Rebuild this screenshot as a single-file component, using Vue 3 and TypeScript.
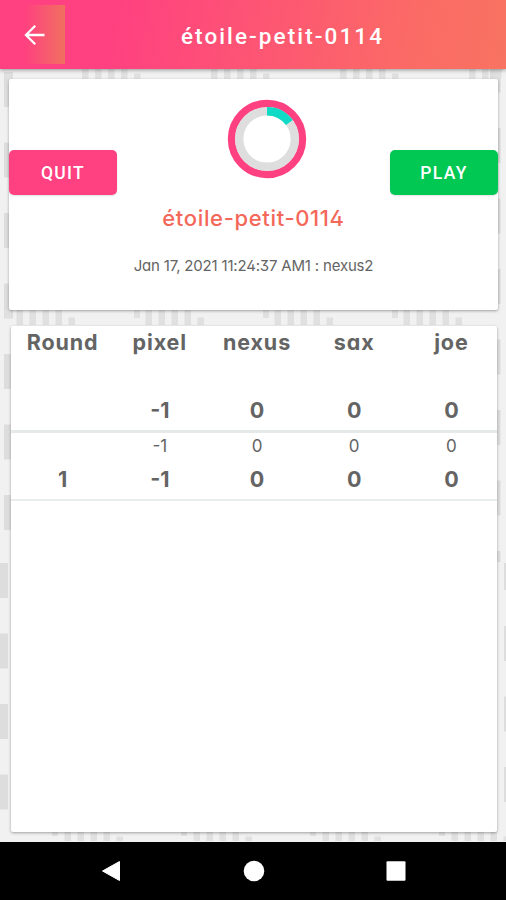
<script setup lang="ts">
interface RoundRow {
  label: string
  points: number[]
  totals: number[]
}

const gameName = 'étoile-petit-0114'
const created = 'Jan 17, 2021 11:24:37 AM1 : nexus2'
const players: string[] = ['pixel', 'nexus', 'sax', 'joe']
const totals: number[] = [-1, 0, 0, 0]
const rounds: RoundRow[] = [{ label: '1', points: [-1, 0, 0, 0], totals: [-1, 0, 0, 0] }]

// Wallpaper dashes: each entry is x, y, width, height.
type Box = [number, number, number, number]
const period = 70.5
const dashes: Box[] = [
  ...Array.from({ length: 7 }, (_, i): Box => [4, 72 + i * period, 9, 35]),
  ...Array.from({ length: 4 }, (_, i): Box => [0, 563 + i * period, 8, 35]),
  ...Array.from({ length: 7 }, (_, i): Box => [490, 57.5 + i * period, 10.5, 35]),
  [490, 551, 10.5, 11],
  [504, 563, 2, 27],
  ...Array.from({ length: 3 }, (_, i): Box => [504, 626 + i * period, 2, 35]),
]
const tickRow = (start: number, y: number, height: number): Box[] =>
  Array.from({ length: 5 }, (_, group) =>
    Array.from({ length: 5 }, (_, i): Box => [
      start + group * 129 + i * 13,
      i === 4 ? y + height / 2 : y,
      6.5,
      i === 4 ? height / 2 : height,
    ]),
  ).flat()
const ticks: Box[] = [
  ...tickRow(-47, 68, 11),
  ...tickRow(16.5, 310, 15),
  ...[5, 134, 263, 392].map((x): Box => [x, 310, 6, 8]),
  ...tickRow(64.5, 832, 9),
  ...[52, 181, 310, 439].map((x): Box => [x, 832, 6, 4]),
]
</script>

<template>
  <div class="screen">
    <svg class="wallpaper" width="506" height="842" viewBox="0 0 506 842" aria-hidden="true">
      <rect v-for="(b, i) in dashes" :key="`d${i}`" :x="b[0]" :y="b[1]" :width="b[2]" :height="b[3]" fill="#dddddd" />
      <rect v-for="(b, i) in ticks" :key="`t${i}`" :x="b[0]" :y="b[1]" :width="b[2]" :height="b[3]" fill="#e0e0e0" />
    </svg>
    <div class="app">
      <header class="toolbar">
        <button class="back" aria-label="Back">
          <svg width="22" height="22" viewBox="0 0 22 22">
            <path d="M20.5 11H2.5M11.2 1.8L2 11l9.2 9.2" fill="none" stroke="#fff" stroke-width="2.3" />
          </svg>
        </button>
        <h1 class="title">{{ gameName }}</h1>
      </header>

      <main class="content">
        <section class="card summary">
          <button class="action quit">QUIT</button>
          <div class="game">
            <svg class="dial" width="80" height="80" viewBox="0 0 80 80">
              <circle cx="40" cy="40" r="35.5" fill="#fff" stroke="#ff4081" stroke-width="7.4" />
              <circle cx="40" cy="40" r="27.8" fill="none" stroke="#dedede" stroke-width="8.4" />
              <path d="M40 12.2A27.8 27.8 0 0 1 62.4 23.6" fill="none" stroke="#0fdac5" stroke-width="8.4" />
            </svg>
            <h2 class="name">{{ gameName }}</h2>
            <p class="created">{{ created }}</p>
          </div>
          <button class="action play">PLAY</button>
        </section>

        <section class="card scores">
          <div class="head">
            <div class="row names">
              <span>Round</span>
              <span v-for="p in players" :key="p">{{ p }}</span>
            </div>
            <div class="row">
              <span></span>
              <span v-for="(t, i) in totals" :key="i">{{ t }}</span>
            </div>
          </div>
          <div v-for="r in rounds" :key="r.label" class="round">
            <div class="row points">
              <span></span>
              <span v-for="(n, i) in r.points" :key="i">{{ n }}</span>
            </div>
            <div class="row">
              <span>{{ r.label }}</span>
              <span v-for="(n, i) in r.totals" :key="i">{{ n }}</span>
            </div>
          </div>
        </section>
      </main>

      <nav class="navbar">
        <svg width="20" height="22" viewBox="0 0 20 22"><path d="M18.5 1.5v19L1.5 11z" fill="#fff" stroke="#fff" stroke-linejoin="round" /></svg>
        <svg width="22" height="22" viewBox="0 0 22 22"><circle cx="11" cy="11" r="10.3" fill="#fff" /></svg>
        <svg width="20" height="22" viewBox="0 0 20 22"><rect x=".5" y="1.3" width="19" height="19.4" rx="1" fill="#fff" /></svg>
      </nav>
    </div>
  </div>
</template>

<style>
body {
  margin: 0;
}
</style>

<style scoped>
.screen {
  display: grid;
  width: 506px;
  height: 900px;
  overflow: hidden;
  background: #f1f1f1;
  font-family: Inter, sans-serif;
  font-feature-settings: 'cv11', 'ss01';
  color: #646464;
}
.wallpaper,
.app {
  grid-area: 1 / 1;
}
.app {
  position: relative;
  display: flex;
  flex-direction: column;
  min-height: 0;
}
button {
  border: 0;
  padding: 0;
  color: #fff;
}
h1,
h2,
p {
  margin: 0;
}
.toolbar {
  display: grid;
  grid-template-columns: 43px 1fr;
  align-items: center;
  height: 69px;
  flex: none;
  padding: 0 6px 0 22px;
  box-sizing: border-box;
  background: linear-gradient(100deg, #ff4081 22%, #fb6a66 80%, #f87361);
  box-shadow: 0 1px 4px rgba(0, 0, 0, 0.4);
}
.back {
  display: flex;
  align-items: center;
  width: 43px;
  height: 59px;
  padding: 0 0 0 2px;
  background: linear-gradient(90deg, #ff4081 5%, #f1705f);
}
.title {
  padding-top: 2px;
  text-align: center;
  font: 500 22.5px/30px Roboto, sans-serif;
  letter-spacing: 2.1px;
  color: #fff;
}
.content {
  display: flex;
  flex-direction: column;
  gap: 16px;
  flex: 1;
  padding: 10px 8px 10px 9px;
}
.card {
  background: #fff;
  border-radius: 2px;
  box-shadow: 0 1px 3px rgba(0, 0, 0, 0.34);
}
.summary {
  display: flex;
  justify-content: space-between;
  height: 231px;
}
.action {
  width: 108px;
  height: 45px;
  margin-top: 71px;
  padding-top: 2px;
  border-radius: 5px;
  font: 500 17.5px/43px Roboto, sans-serif;
  letter-spacing: 1.3px;
  box-shadow: 0 1px 2px rgba(0, 0, 0, 0.12);
}
.quit {
  background: #ff4081;
}
.play {
  background: #00c853;
}
.game {
  display: flex;
  flex-direction: column;
  align-items: center;
  padding-top: 20px;
}
.dial {
  margin-left: 27px;
}
.name {
  margin: 22px 0 0;
  font-size: 22px;
  line-height: 34px;
  font-weight: 450;
  letter-spacing: 0.65px;
  color: #f4685a;
}
.created {
  margin-top: 19px;
  font-size: 15px;
  line-height: 24px;
  letter-spacing: -0.18px;
  white-space: nowrap;
}
.scores {
  flex: 1;
  margin: 0 1px 0 2px;
}
.row {
  display: grid;
  grid-template-columns: repeat(5, 1fr);
  height: 32px;
  margin: 0 -3px 0 3px;
  text-align: center;
  font-size: 21.5px;
  line-height: 32px;
  font-weight: 700;
}
.names {
  letter-spacing: 0.9px;
}
.head {
  display: flex;
  flex-direction: column;
  justify-content: space-between;
  height: 107px;
  border-bottom: 3px solid #e5e9e9;
  box-sizing: border-box;
}
.head .row:last-child {
  margin-bottom: 4px;
}
.round {
  height: 68px;
  box-sizing: border-box;
  border-bottom: 2px solid #e9ecec;
}
.points {
  height: 30px;
  font-size: 17px;
  line-height: 27px;
  font-weight: 400;
}
.navbar {
  display: flex;
  align-items: center;
  justify-content: space-between;
  height: 58px;
  flex: none;
  padding: 0 100px 0 101px;
  box-sizing: border-box;
  background: #000;
}
</style>
